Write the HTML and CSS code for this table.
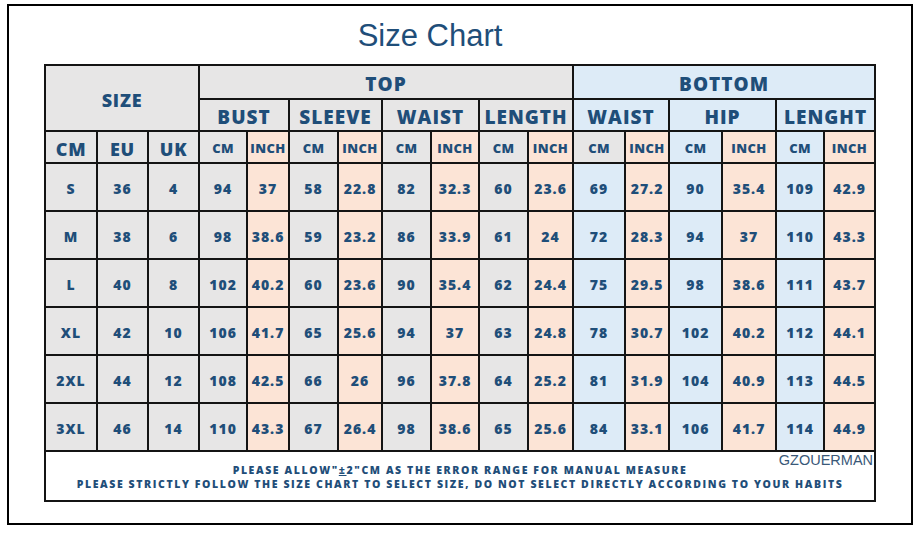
FILE: index.html
```html
<!DOCTYPE html>
<html>
<head>
<meta charset="utf-8">
<link rel="stylesheet" href="styles.css">
</head>
<body>
<div class="frame">
  <h1 class="title">Size Chart</h1>
  <table class="chart">
    <colgroup>
      <col style="width:52px"><col style="width:51px"><col style="width:51px">
      <col style="width:48px"><col style="width:42px"><col style="width:49px"><col style="width:44px">
      <col style="width:49px"><col style="width:48px"><col style="width:49px"><col style="width:45px">
      <col style="width:52px"><col style="width:44px"><col style="width:53px"><col style="width:54px">
      <col style="width:48px"><col style="width:51px">
    </colgroup>
    <tr class="h1">
      <td class="g big" colspan="3" rowspan="2">SIZE</td>
      <td class="g grp" colspan="8">TOP</td>
      <td class="b grp" colspan="6">BOTTOM</td>
    </tr>
    <tr class="h2">
      <td class="g grp" colspan="2">BUST</td>
      <td class="g grp" colspan="2">SLEEVE</td>
      <td class="g grp" colspan="2">WAIST</td>
      <td class="g grp" colspan="2">LENGTH</td>
      <td class="b grp" colspan="2">WAIST</td>
      <td class="b grp" colspan="2">HIP</td>
      <td class="b grp" colspan="2">LENGHT</td>
    </tr>
    <tr class="h3">
      <td class="g big">CM</td><td class="g big">EU</td><td class="g big">UK</td>
      <td class="g unit">CM</td><td class="p unit">INCH</td>
      <td class="g unit">CM</td><td class="p unit">INCH</td>
      <td class="g unit">CM</td><td class="p unit">INCH</td>
      <td class="g unit">CM</td><td class="p unit">INCH</td>
      <td class="g unit">CM</td><td class="p unit">INCH</td>
      <td class="b unit">CM</td><td class="p unit">INCH</td>
      <td class="b unit">CM</td><td class="p unit">INCH</td>
    </tr>
    <tr class="row">
      <td class="g">S</td><td class="g">36</td><td class="g">4</td>
      <td class="g">94</td><td class="p">37</td><td class="g">58</td><td class="p">22.8</td>
      <td class="g">82</td><td class="p">32.3</td><td class="g">60</td><td class="p">23.6</td>
      <td class="b">69</td><td class="p">27.2</td><td class="b">90</td><td class="p">35.4</td>
      <td class="b">109</td><td class="p">42.9</td>
    </tr>
    <tr class="row">
      <td class="g">M</td><td class="g">38</td><td class="g">6</td>
      <td class="g">98</td><td class="p">38.6</td><td class="g">59</td><td class="p">23.2</td>
      <td class="g">86</td><td class="p">33.9</td><td class="g">61</td><td class="p">24</td>
      <td class="b">72</td><td class="p">28.3</td><td class="b">94</td><td class="p">37</td>
      <td class="b">110</td><td class="p">43.3</td>
    </tr>
    <tr class="row">
      <td class="g">L</td><td class="g">40</td><td class="g">8</td>
      <td class="g">102</td><td class="p">40.2</td><td class="g">60</td><td class="p">23.6</td>
      <td class="g">90</td><td class="p">35.4</td><td class="g">62</td><td class="p">24.4</td>
      <td class="b">75</td><td class="p">29.5</td><td class="b">98</td><td class="p">38.6</td>
      <td class="b">111</td><td class="p">43.7</td>
    </tr>
    <tr class="row">
      <td class="g">XL</td><td class="g">42</td><td class="g">10</td>
      <td class="g">106</td><td class="p">41.7</td><td class="g">65</td><td class="p">25.6</td>
      <td class="g">94</td><td class="p">37</td><td class="g">63</td><td class="p">24.8</td>
      <td class="b">78</td><td class="p">30.7</td><td class="b">102</td><td class="p">40.2</td>
      <td class="b">112</td><td class="p">44.1</td>
    </tr>
    <tr class="row">
      <td class="g">2XL</td><td class="g">44</td><td class="g">12</td>
      <td class="g">108</td><td class="p">42.5</td><td class="g">66</td><td class="p">26</td>
      <td class="g">96</td><td class="p">37.8</td><td class="g">64</td><td class="p">25.2</td>
      <td class="b">81</td><td class="p">31.9</td><td class="b">104</td><td class="p">40.9</td>
      <td class="b">113</td><td class="p">44.5</td>
    </tr>
    <tr class="row">
      <td class="g">3XL</td><td class="g">46</td><td class="g">14</td>
      <td class="g">110</td><td class="p">43.3</td><td class="g">67</td><td class="p">26.4</td>
      <td class="g">98</td><td class="p">38.6</td><td class="g">65</td><td class="p">25.6</td>
      <td class="b">84</td><td class="p">33.1</td><td class="b">106</td><td class="p">41.7</td>
      <td class="b">114</td><td class="p">44.9</td>
    </tr>
    <tr class="foot">
      <td colspan="17" class="note">
        <span class="brand">GZOUERMAN</span>
        <div class="line">PLEASE ALLOW"<u>±</u>2"CM AS THE ERROR RANGE FOR MANUAL MEASURE</div>
        <div class="line">PLEASE STRICTLY FOLLOW THE SIZE CHART TO SELECT SIZE, DO NOT SELECT DIRECTLY ACCORDING TO YOUR HABITS</div>
      </td>
    </tr>
  </table>
</div>
</body>
</html>
```
FILE: styles.css
```css
html, body {
  margin: 0;
  padding: 0;
  background: #ffffff;
}

.frame {
  box-sizing: border-box;
  width: 906px;
  height: 521px;
  margin: 4px 0 0 7px;
  border: 2px solid #000;
  background: #fff;
}

.title {
  box-sizing: border-box;
  height: 58px;
  margin: 0;
  padding: 12px 60px 0 0;
  font-family: "Liberation Sans", Arial, sans-serif;
  font-weight: normal;
  font-size: 31px;
  line-height: 36px;
  text-align: center;
  color: #1f4e79;
}

.chart {
  margin-left: 35px;
  width: 830px;
  table-layout: fixed;
  border-collapse: collapse;
  font-family: "Open Sans", "DejaVu Sans", sans-serif;
  font-weight: 800;
  color: #1f4e79;
}

.chart td {
  border: 2px solid #141414;
  padding: 0;
  text-align: center;
  vertical-align: middle;
  white-space: nowrap;
  overflow: hidden;
}

.g { background: #e7e6e6; }
.p { background: #fce4d6; }
.b { background: #ddebf7; }

.h1 { height: 34px; }
.h2 { height: 31px; }
.h3 { height: 32px; }
.row { height: 48px; }
.foot { height: 50px; }

.grp {
  font-size: 19px;
  letter-spacing: 1px;
  padding-top: 4px !important;
}

.big {
  font-size: 18px;
  letter-spacing: 0.8px;
  padding-top: 3px !important;
}

.unit {
  font-size: 13px;
  letter-spacing: 0.4px;
  padding-top: 2px !important;
}

.row td {
  font-size: 14px;
  letter-spacing: 1px;
  padding-top: 3px;
}

.note {
  position: relative;
  background: #fff;
  font-size: 10.5px;
  letter-spacing: 1.6px;
  padding-top: 2px !important;
}

.line {
  height: 14px;
  line-height: 14px;
}

.note u {
  text-decoration: underline;
}

.brand {
  position: absolute;
  top: 0;
  right: 1px;
  font-family: "Liberation Sans", Arial, sans-serif;
  font-weight: normal;
  font-size: 14.5px;
  letter-spacing: 0;
  color: #3a5878;
}
```
